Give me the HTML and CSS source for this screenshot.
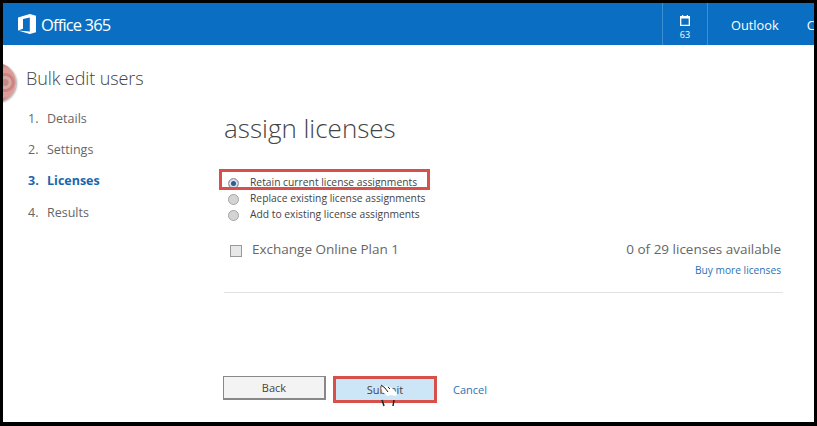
FILE: index.html
```html
<!DOCTYPE html>
<html lang="en">

<head>
  <meta charset="UTF-8">
  <title>Bulk edit users</title>
  <link rel="stylesheet" href="styles.css">
</head>

<body>
  <div class="frame">
    <header class="topBar">
      <div class="brand">
        <svg class="brandIcon" width="18" height="20" viewBox="0 0 18 20">
          <path fill="#fff" d="M0 3.600 11.800 0 18 1.800v16.400L11.800 20 0 16.400 11.800 17.600V3.600L5 5v9.800L0 16.400z" />
        </svg>
        <span class="brandName">Office 365</span>
      </div>
      <nav class="topNav">
        <div class="calendarTab">
          <svg width="10" height="11" viewBox="0 0 10 11">
            <path fill="none" stroke="#fff" stroke-width="1.300" d="M.7 1.700h8.600v8.600H.7z" />
            <path fill="#fff" d="M0 1h10v2.500H0zM2 0h1.300v1H2zM6.700 0H8v1H6.700z" />
          </svg>
          <span class="calendarCount">63</span>
        </div>
        <a class="navLink">Outlook</a>
        <a class="navLink">C</a>
      </nav>
    </header>

    <div class="content">
      <div class="avatar"></div>
      <aside class="sidebar">
        <h1 class="pageTitle">Bulk edit users</h1>
        <ol class="steps">
          <li class="step"><span class="stepNum">1.</span>Details</li>
          <li class="step"><span class="stepNum">2.</span>Settings</li>
          <li class="step active"><span class="stepNum">3.</span>Licenses</li>
          <li class="step"><span class="stepNum">4.</span>Results</li>
        </ol>
      </aside>

      <main class="panel">
        <h2 class="panelTitle">assign licenses</h2>

        <div class="radioGroup">
          <label class="radioRow picked"><span class="radio on"></span>Retain current license assignments</label>
          <label class="radioRow"><span class="radio"></span>Replace existing license assignments</label>
          <label class="radioRow"><span class="radio"></span>Add to existing license assignments</label>
        </div>

        <div class="licenseRow">
          <span class="checkBox"></span>
          <span class="planName">Exchange Online Plan 1</span>
          <div class="licenseInfo">
            <div class="available">0 of 29 licenses available</div>
            <a class="buyLink">Buy more licenses</a>
          </div>
        </div>

        <div class="actions">
          <button class="btn">Back</button>
          <button class="btn submit">Submit
            <svg class="busyCursor" width="20" height="24" viewBox="0 0 20 24">
              <path fill="#fff" d="M2 4l5-2 6 2 5 5-1 3-5-1-4 1-4-4z" />
              <path fill="none" stroke="#222" d="M2 1l4 3 3 4M9 3l2 2" />
              <path fill="none" stroke="#222" stroke-width="1.500" d="M3 16l2 6M15 16l-1 6" />
            </svg>
          </button>
          <a class="cancelLink">Cancel</a>
        </div>
      </main>
    </div>
  </div>
</body>

</html>
```

FILE: styles.css
```css
* {
  box-sizing: border-box;
}

html,
body {
  height: 100%;
  margin: 0;
}

body {
  background-color: #000;
  padding: 3px 3px 4px 3px;
  font-family: "Open Sans", "Noto Sans", sans-serif;
  color: #555;
  overflow: hidden;
}

.frame {
  height: 100%;
  background-color: #fff;
  overflow: hidden;
  display: flex;
  flex-direction: column;
}

.topBar {
  height: 42px;
  flex: none;
  background-color: #0a6fc2;
  display: flex;
  justify-content: space-between;
  color: #fff;
}

.brand {
  display: flex;
  align-items: center;
  padding-left: 15px;
}

.brandIcon {
  margin-right: 5px;
}

.brandName {
  font-size: 16.500px;
  letter-spacing: -0.850px;
}

.topNav {
  display: flex;
  width: 152px;
  overflow: hidden;
  flex: none;
}

.calendarTab {
  width: 46px;
  flex: none;
  border-left: 1px solid #3d8fd3;
  border-right: 1px solid #3d8fd3;
  display: flex;
  flex-direction: column;
  align-items: center;
  padding-top: 12px;
}

.calendarCount {
  font-size: 9px;
  line-height: 12px;
  margin-top: 3px;
}

.navLink {
  font-size: 12.800px;
  line-height: 44px;
  padding-left: 23px;
  white-space: nowrap;
}

.navLink+.navLink {
  padding-left: 28px;
}

.content {
  flex: 1;
  display: flex;
  position: relative;
  min-height: 0;
}

.avatar {
  position: absolute;
  left: -26px;
  top: 18px;
  width: 39px;
  height: 39px;
  border-radius: 50%;
  background: radial-gradient(circle at 72% 50%, #c08a86 0 3px, #dba9a5 4px 6px, #c98583 7px 9px, #dd9c97 10px 14px, #c4736f 19px);
  box-shadow: 1px 1px 2px #aaa;
}

.sidebar {
  width: 221px;
  flex: none;
  padding: 21px 0 0 23px;
}

.pageTitle {
  margin: 0 0 18.500px;
  font-size: 18px;
  line-height: 25px;
  font-weight: 300;
  letter-spacing: -0.1px;
  color: #444;
}

.steps {
  list-style: none;
  margin: 0;
  padding: 0 0 0 2px;
}

.step {
  font-size: 12.500px;
  line-height: 17px;
  margin-bottom: 14.400px;
  color: #666;
}

.step.active {
  color: #1a66ad;
  font-weight: 700;
}

.stepNum {
  display: inline-block;
  width: 19px;
}

.panel {
  flex: 1;
  padding: 65px 31px 0 0;
  display: flex;
  flex-direction: column;
}

.panelTitle {
  margin: 0 0 28px;
  font-size: 26px;
  line-height: 36px;
  font-weight: 300;
  color: #444;
}

.radioGroup {
  display: flex;
  flex-direction: column;
  margin-left: 4px;
}

.radioRow {
  display: flex;
  align-items: center;
  font-size: 10.300px;
  line-height: 16px;
  height: 16px;
  color: #444;
  position: relative;
}

/* red callout drawn over the first row */
.radioRow.picked::after {
  content: "";
  position: absolute;
  left: -9px;
  top: -5px;
  width: 205px;
  height: 15px;
  border: 3px solid #d8504a;
}

.radio {
  width: 11px;
  height: 11px;
  border-radius: 50%;
  border: 1px solid #a5a5a5;
  background-color: #d4d4d4;
  margin: 2px 11px 0 0;
  flex: none;
}

.radio.on {
  background-color: #2a5f92;
  box-shadow: inset 0 0 0 2px #dde;
}

.licenseRow {
  display: flex;
  margin-top: 17px;
  padding-bottom: 14px;
  border-bottom: 1px solid #e2e2e2;
}

.checkBox {
  width: 12px;
  height: 12px;
  border: 1px solid #999;
  background-color: #e8e8e8;
  margin: 6px 10px 0 6px;
  flex: none;
}

.planName {
  font-size: 13.500px;
  line-height: 20px;
  color: #666;
}

.licenseInfo {
  margin-left: auto;
  padding-right: 2px;
  text-align: right;
}

.available {
  font-size: 13.500px;
  line-height: 20px;
  color: #666;
}

.buyLink,
.cancelLink {
  color: #2a72b5;
}

.buyLink {
  display: block;
  font-size: 10.200px;
  line-height: 15px;
  margin-top: 4px;
}

.actions {
  display: flex;
  align-items: center;
  margin: 83px 0 0 -1px;
}

.btn {
  width: 103px;
  height: 24px;
  padding: 0;
  border: 1px solid #888;
  border-width: 1px 2px 2px 1px;
  background-color: #f3f3f3;
  font-family: inherit;
  font-size: 11px;
  color: #444;
}

.btn.submit {
  position: relative;
  width: 98px;
  height: 21px;
  margin: 3px 0 0 10px;
  background-color: #cde6f7;
  outline: 3px solid #d8504a;
  border: none;
}

.busyCursor {
  position: absolute;
  left: 43px;
  top: 5px;
}

.cancelLink {
  font-size: 11px;
  margin-left: 19px;
  margin-top: 3px;
}
```
